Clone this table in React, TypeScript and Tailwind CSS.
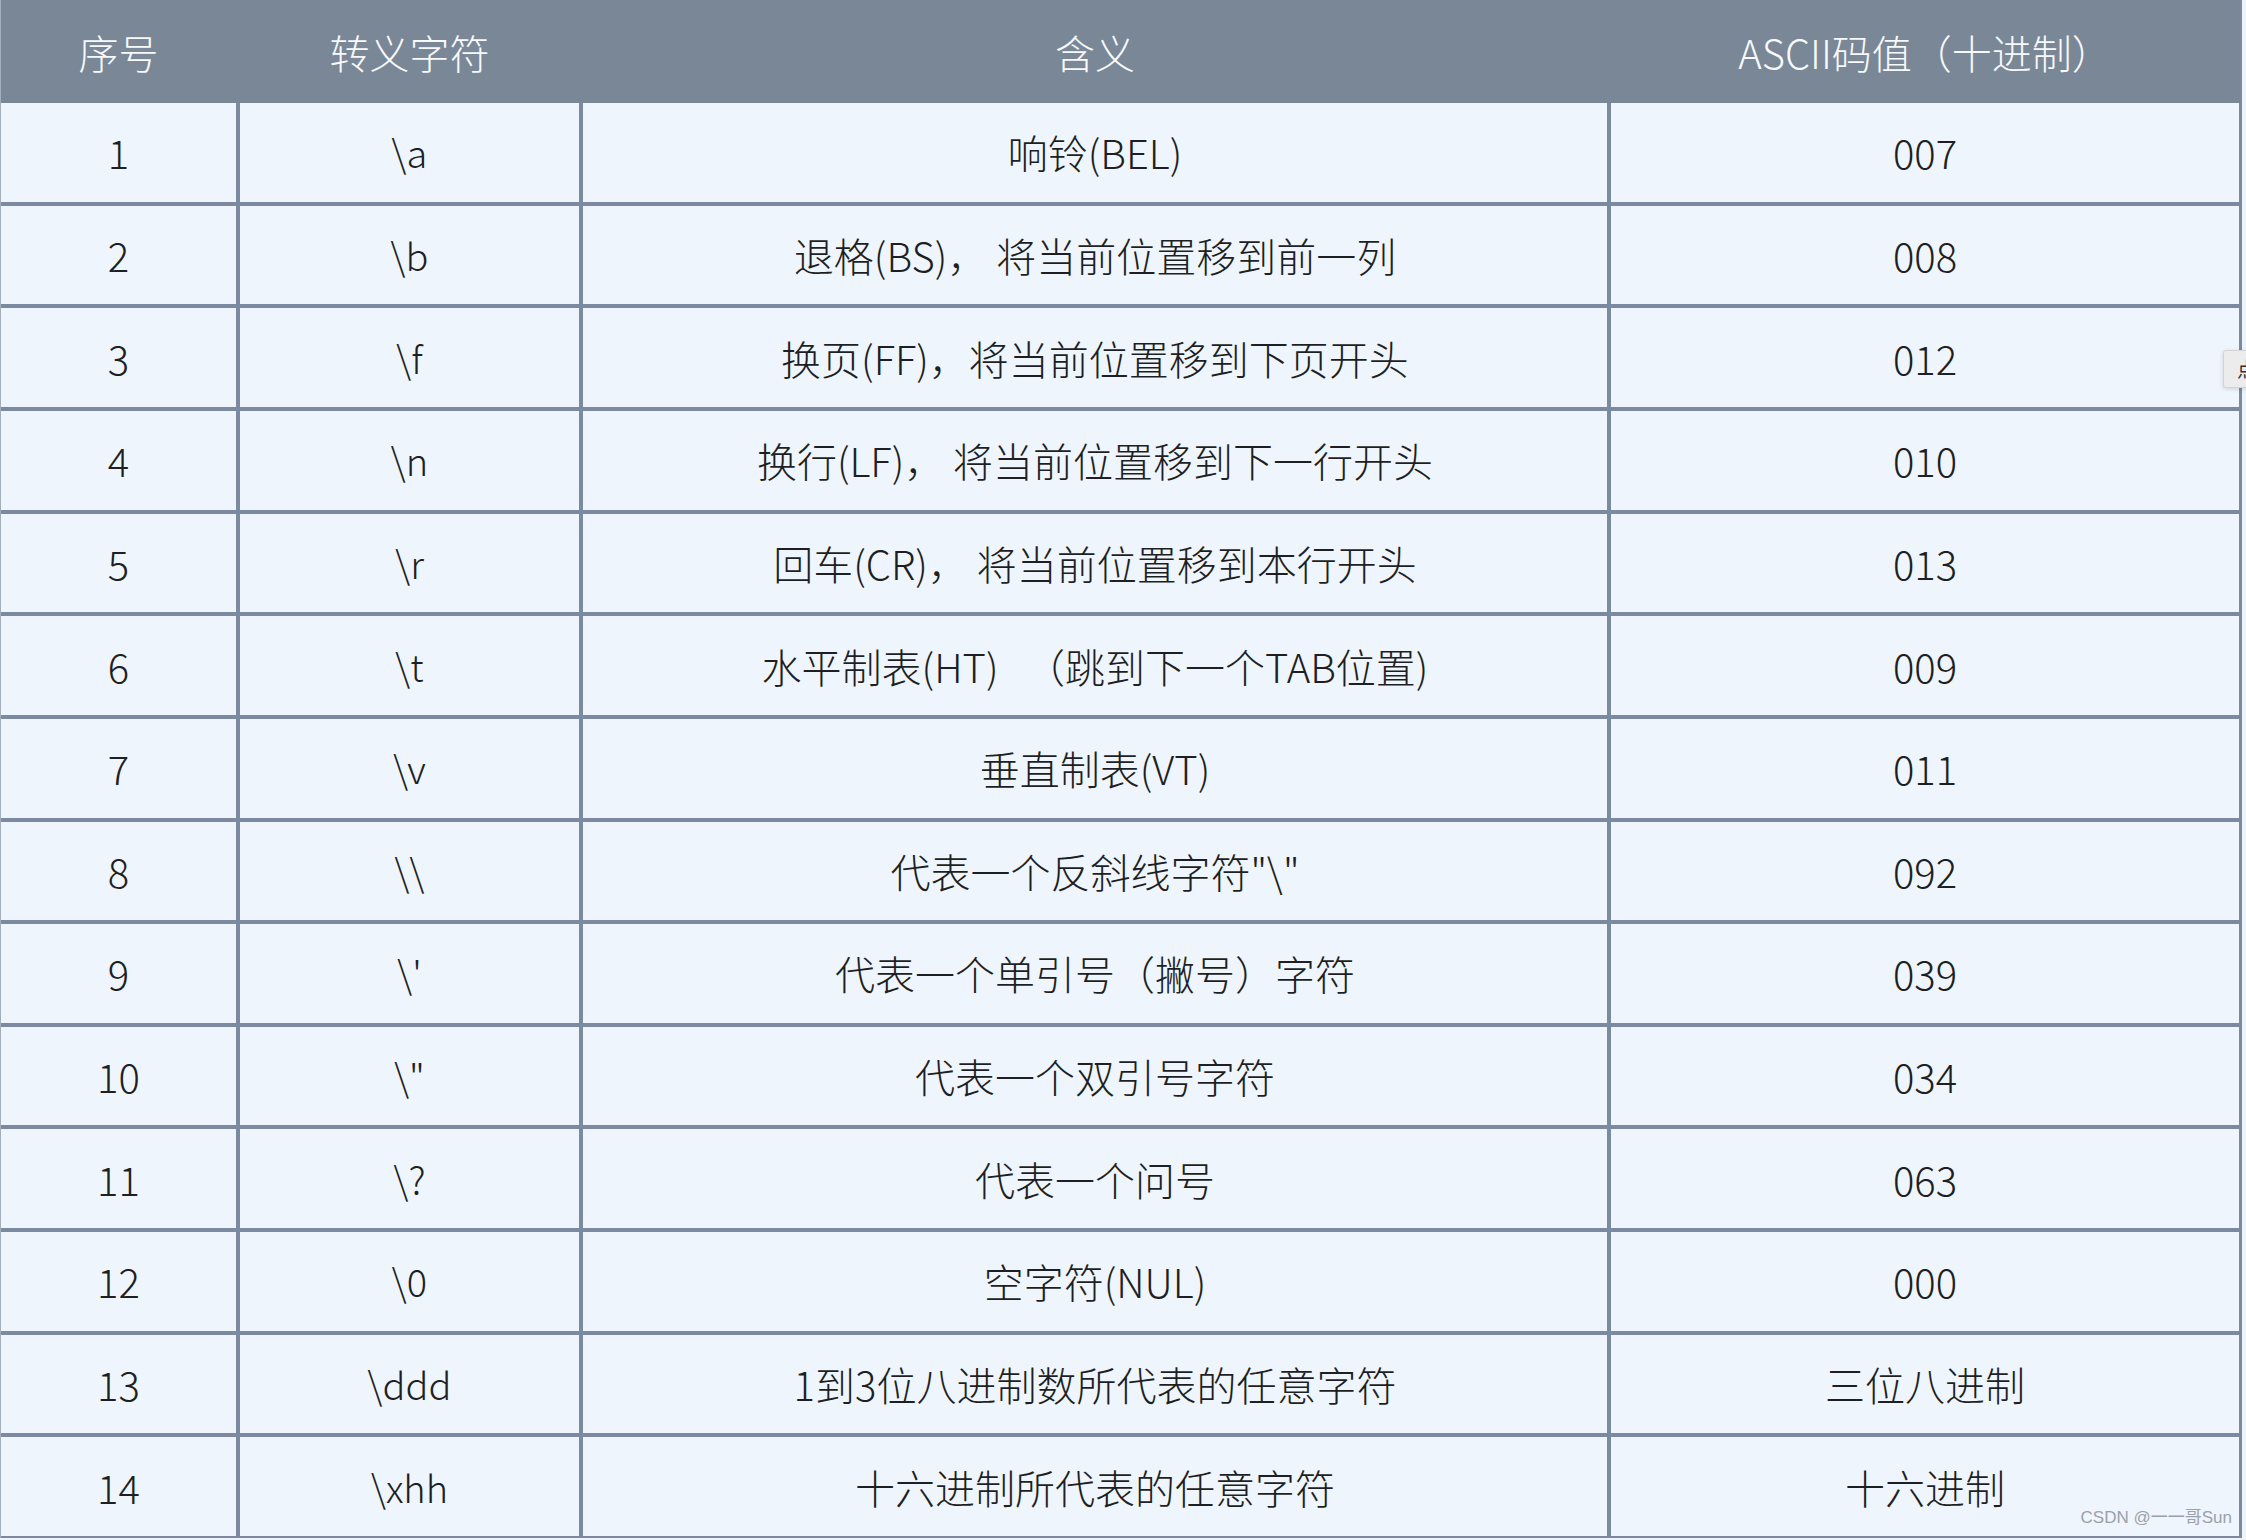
import * as React from 'react';

const ROWS: [string, string, string, string][] = [
  ['1', '\\a', '响铃(BEL)', '007'],
  ['2', '\\b', '退格(BS)， 将当前位置移到前一列', '008'],
  ['3', '\\f', '换页(FF)，将当前位置移到下页开头', '012'],
  ['4', '\\n', '换行(LF)， 将当前位置移到下一行开头', '010'],
  ['5', '\\r', '回车(CR)， 将当前位置移到本行开头', '013'],
  ['6', '\\t', '水平制表(HT)   （跳到下一个TAB位置)', '009'],
  ['7', '\\v', '垂直制表(VT)', '011'],
  ['8', '\\\\', '代表一个反斜线字符"\\"', '092'],
  ['9', "\\'", '代表一个单引号（撇号）字符', '039'],
  ['10', '\\"', '代表一个双引号字符', '034'],
  ['11', '\\?', '代表一个问号', '063'],
  ['12', '\\0', '空字符(NUL)', '000'],
  ['13', '\\ddd', '1到3位八进制数所代表的任意字符', '三位八进制'],
  ['14', '\\xhh', '十六进制所代表的任意字符', '十六进制'],
];

const FONT = "font-['Noto_Sans_CJK_SC','Microsoft_YaHei',sans-serif]";
const COLS = 'grid grid-cols-[235px_339px_1024px_628px] gap-x-[4px]';

function HeaderRow(): React.JSX.Element {
  return (
    <div className={`${COLS} h-[103px] bg-[#7a8797] text-[40px] font-light text-[#f7f9fb]`}>
      <div className="flex items-center justify-center">序号</div>
      <div className="flex items-center justify-center">转义字符</div>
      <div className="flex items-center justify-center">含义</div>
      <div className="flex items-center justify-center">ASCII码值（十进制）</div>
    </div>
  );
}

export default function App(): React.JSX.Element {
  return (
    <div className={`${FONT} relative h-[1540px] w-[2246px] overflow-hidden bg-[#eef3fa]`}>
      <div className="w-[2242px] border-l border-r-2 border-l-[#a3aebb] border-r-[#7b8aa0]">
        <HeaderRow />
        <div
          className={`${COLS} h-[1435px] grid-rows-[repeat(14,1fr)] gap-y-[4px] border-b-2 border-b-[#7b8aa0] bg-[#7b8aa0] text-[40px] font-light leading-none text-[#1e1f22]`}
        >
          {ROWS.map(([no, esc, meaning, code]) => (
            <React.Fragment key={no}>
              <div className="flex items-center justify-center bg-[#eff5fc]">{no}</div>
              <div className="flex items-center justify-center bg-[#eff5fc] text-[38px]">{esc}</div>
              <div className="flex items-center justify-center whitespace-pre bg-[#eff5fc]">
                {meaning}
              </div>
              <div className="flex items-center justify-center bg-[#eff5fc]">{code}</div>
            </React.Fragment>
          ))}
        </div>
      </div>

      <div className="absolute left-[2223px] top-[350px] flex h-[38px] w-[40px] items-center rounded-l-[3px] border border-[#d4d4d4] bg-[#ececec] pl-[13px] text-[20px] text-[#333] shadow-[0_1px_4px_rgba(0,0,0,0.15)]">
        点
      </div>

      <div className="absolute bottom-[10px] right-[14px] font-['Liberation_Sans','Noto_Sans_CJK_SC',sans-serif] text-[17px] text-[#9aa1aa]">
        CSDN @一一哥Sun
      </div>
    </div>
  );
}
